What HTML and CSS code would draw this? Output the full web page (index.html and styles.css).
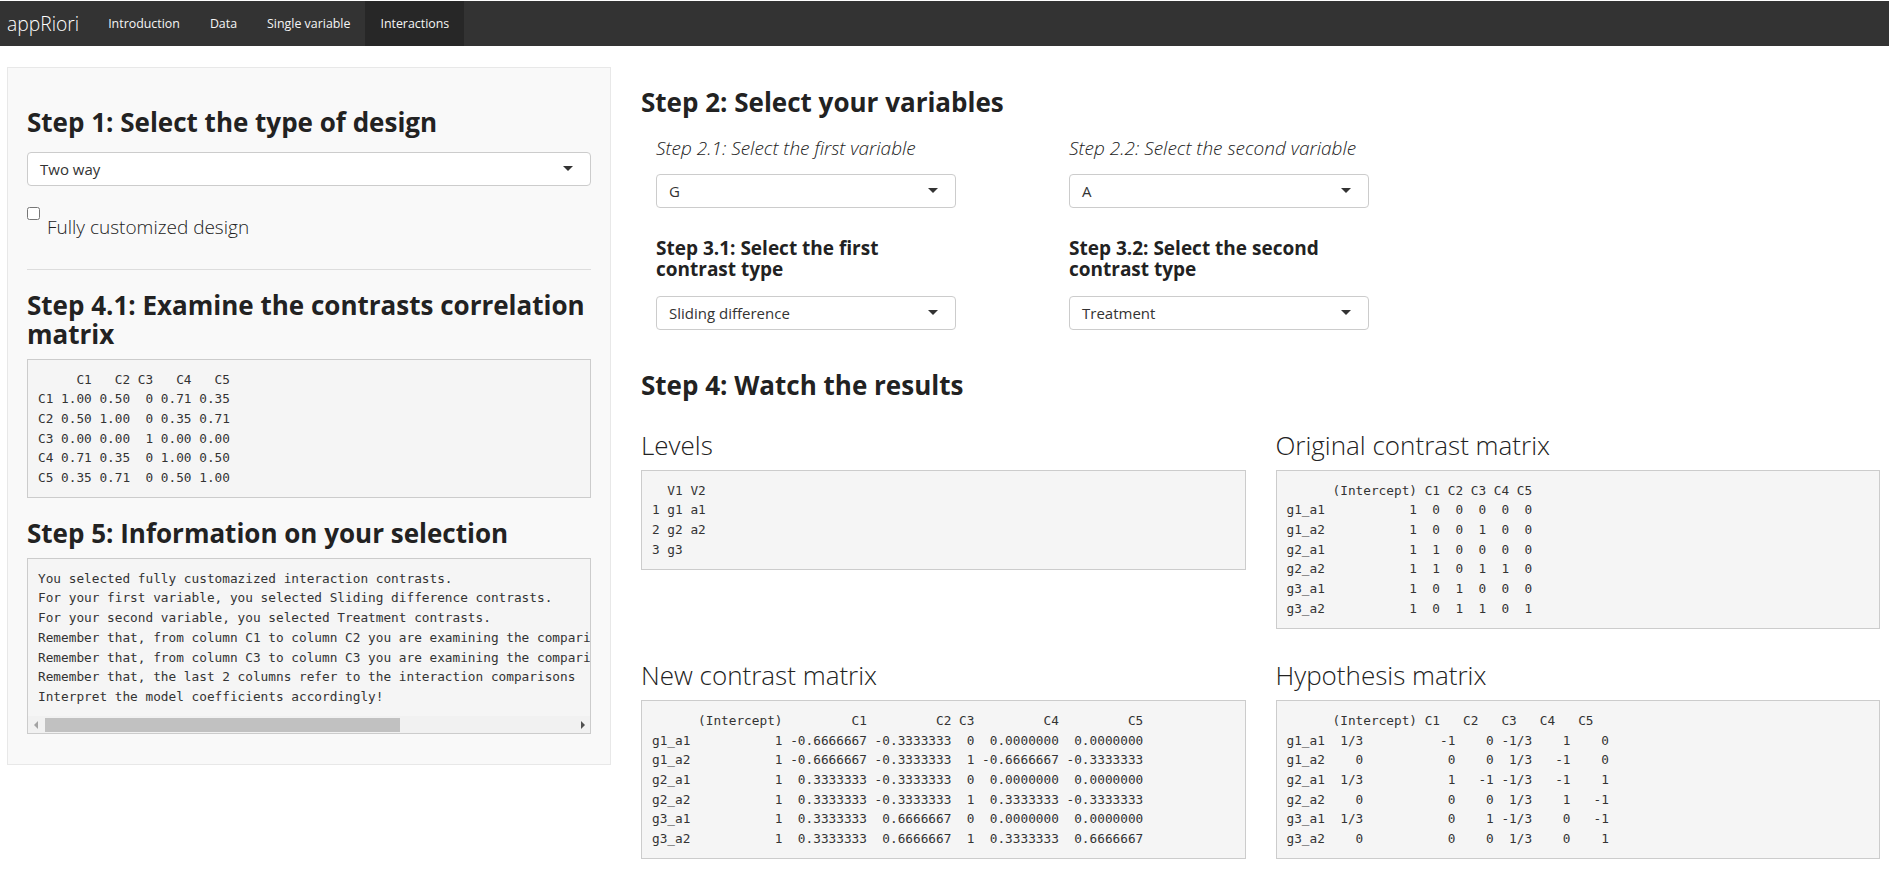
FILE: index.html
```html
<!DOCTYPE html>
<html lang="en">
<head>
    <meta charset="UTF-8">
    <meta name="viewport" content="width=device-width, initial-scale=1.0">
    <title>appRiori</title>
    <link rel="stylesheet" href="styles.css">
</head>
<body>
    <nav class="navbar">
        <span class="brand">appRiori</span>
        <a class="nav-link">Introduction</a>
        <a class="nav-link">Data</a>
        <a class="nav-link">Single variable</a>
        <a class="nav-link active">Interactions</a>
    </nav>
    <div class="layout">
        <aside class="well">
            <h3>Step 1: Select the type of design</h3>
            <div class="select select-first">Two way</div>
            <label class="check-row">
                <input type="checkbox">
                <span>Fully customized design</span>
            </label>
            <hr>
            <h3>Step 4.1: Examine the contrasts correlation matrix</h3>
<pre class="output">     C1   C2 C3   C4   C5
C1 1.00 0.50  0 0.71 0.35
C2 0.50 1.00  0 0.35 0.71
C3 0.00 0.00  1 0.00 0.00
C4 0.71 0.35  0 1.00 0.50
C5 0.35 0.71  0 0.50 1.00</pre>
            <h3>Step 5: Information on your selection</h3>
            <div class="scroll-box">
<pre class="scroll-text">You selected fully customazized interaction contrasts.
For your first variable, you selected Sliding difference contrasts.
For your second variable, you selected Treatment contrasts.
Remember that, from column C1 to column C2 you are examining the comparis
Remember that, from column C3 to column C3 you are examining the comparis
Remember that, the last 2 columns refer to the interaction comparisons
Interpret the model coefficients accordingly!</pre>
                <div class="scrollbar">
                    <span class="arrow arrow-left"></span>
                    <span class="thumb"></span>
                    <span class="arrow arrow-right"></span>
                </div>
            </div>
        </aside>
        <main class="results">
            <h3>Step 2: Select your variables</h3>
            <div class="var-grid">
                <div class="var-col">
                    <p class="step-label">Step 2.1: Select the first variable</p>
                    <div class="select">G</div>
                    <h4>Step 3.1: Select the first contrast type</h4>
                    <div class="select">Sliding difference</div>
                </div>
                <div class="var-col">
                    <p class="step-label">Step 2.2: Select the second variable</p>
                    <div class="select">A</div>
                    <h4>Step 3.2: Select the second contrast type</h4>
                    <div class="select">Treatment</div>
                </div>
            </div>
            <h3 class="watch">Step 4: Watch the results</h3>
            <div class="output-grid">
                <section>
                    <h2>Levels</h2>
<pre class="output">  V1 V2
1 g1 a1
2 g2 a2
3 g3   </pre>
                </section>
                <section>
                    <h2>Original contrast matrix</h2>
<pre class="output">      (Intercept) C1 C2 C3 C4 C5
g1_a1           1  0  0  0  0  0
g1_a2           1  0  0  1  0  0
g2_a1           1  1  0  0  0  0
g2_a2           1  1  0  1  1  0
g3_a1           1  0  1  0  0  0
g3_a2           1  0  1  1  0  1</pre>
                </section>
                <section>
                    <h2>New contrast matrix</h2>
<pre class="output">      (Intercept)         C1         C2 C3         C4         C5
g1_a1           1 -0.6666667 -0.3333333  0  0.0000000  0.0000000
g1_a2           1 -0.6666667 -0.3333333  1 -0.6666667 -0.3333333
g2_a1           1  0.3333333 -0.3333333  0  0.0000000  0.0000000
g2_a2           1  0.3333333 -0.3333333  1  0.3333333 -0.3333333
g3_a1           1  0.3333333  0.6666667  0  0.0000000  0.0000000
g3_a2           1  0.3333333  0.6666667  1  0.3333333  0.6666667</pre>
                </section>
                <section>
                    <h2>Hypothesis matrix</h2>
<pre class="output">      (Intercept) C1   C2   C3   C4   C5
g1_a1  1/3          -1    0 -1/3    1    0
g1_a2    0           0    0  1/3   -1    0
g2_a1  1/3           1   -1 -1/3   -1    1
g2_a2    0           0    0  1/3    1   -1
g3_a1  1/3           0    1 -1/3    0   -1
g3_a2    0           0    0  1/3    0    1</pre>
                </section>
            </div>
        </main>
    </div>
</body>
</html>
```

FILE: styles.css
```css
body {
    margin: 0;
    font-family: "Open Sans", sans-serif;
    font-size: 14px;
    color: #222;
    background: #fff;
}
.navbar {
    display: flex;
    align-items: stretch;
    height: 45px;
    margin-top: 1px;
    background: #333;
    color: #fff;
}
.brand {
    padding: 0 14px 0 7px;
    font-size: 19.3px;
    font-weight: 300;
    line-height: 45px;
}
.nav-link {
    padding: 0 15px;
    font-size: 12.4px;
    line-height: 45px;
    color: #f5f5f5;
}
.nav-link.active {
    background: #272727;
}
.layout {
    display: flex;
    gap: 30px;
    padding: 21px 9px 0 7px;
}
.well {
    box-sizing: border-box;
    width: 604px;
    height: 698px;
    flex-shrink: 0;
    padding: 0 19px;
    background: #f9f9f9;
    border: 1px solid #e8e8e8;
}
.results {
    flex: 1;
    min-width: 0;
}
h3 {
    margin: 21px 0 10px;
    font-size: 26px;
    font-weight: 700;
    line-height: 29px;
}
.well h3:first-child {
    margin-top: 40px;
}
.results h3:first-child {
    margin-top: 21px;
}
h4 {
    margin: 30px 0 16px;
    font-size: 19px;
    font-weight: 700;
    line-height: 21px;
}
h2 {
    margin: 0 0 9px;
    font-size: 26px;
    font-weight: 300;
    line-height: 32px;
}
hr {
    margin: 29px 0 0;
    border: none;
    border-top: 1px solid #ddd;
}
.select {
    position: relative;
    box-sizing: border-box;
    height: 34px;
    padding: 0 12px;
    background: #fff;
    border: 1px solid #ccc;
    border-radius: 4px;
    font-size: 15px;
    line-height: 33px;
    color: #333;
}
.select::after {
    content: "";
    position: absolute;
    top: 13px;
    right: 17px;
    border-style: solid;
    border-width: 5px 5px 0;
    border-color: #333 transparent transparent;
}
.select-first {
    margin-top: 15px;
}
.check-row {
    display: flex;
    gap: 7px;
    margin-top: 21px;
}
.check-row input {
    width: 13px;
    height: 13px;
    margin: 0;
}
.check-row span {
    margin-top: 7px;
    font-size: 19px;
    font-weight: 300;
    line-height: 26px;
}
.output, .scroll-text {
    margin: 0;
    font-family: "DejaVu Sans Mono", monospace;
    font-size: 12.75px;
    line-height: 19.7px;
    color: #333;
}
.output {
    box-sizing: border-box;
    padding: 9.5px 10px;
    background: #f5f5f5;
    border: 1px solid #ccc;
}
.scroll-box {
    background: #f5f5f5;
    border: 1px solid #ccc;
}
.scroll-text {
    height: 157px;
    padding: 9.5px 10px 0;
    box-sizing: border-box;
    overflow: hidden;
}
.scrollbar {
    display: flex;
    align-items: center;
    height: 17px;
    background: #f1f1f1;
}
.arrow {
    width: 0;
    height: 0;
    border-style: solid;
    border-width: 4px 4px 4px 0;
    border-color: transparent #a3a3a3 transparent transparent;
    margin-left: 6px;
}
.arrow-right {
    border-width: 4px 0 4px 4px;
    border-color: transparent transparent transparent #505050;
    margin: 0 5px 0 auto;
}
.thumb {
    width: 355px;
    height: 14px;
    margin-left: 7px;
    background: #c1c1c1;
}
.var-grid {
    display: grid;
    grid-template-columns: 413px 413px;
    padding-left: 15px;
}
.var-col {
    width: 300px;
}
.step-label {
    margin: 8px 0 13px;
    font-size: 19px;
    font-style: italic;
    font-weight: 300;
    line-height: 26px;
}
.results h3.watch {
    margin-top: 41px;
    margin-bottom: 29px;
}
.output-grid {
    display: grid;
    grid-template-columns: 1fr 1fr;
    column-gap: 30px;
    row-gap: 30.5px;
}
```
